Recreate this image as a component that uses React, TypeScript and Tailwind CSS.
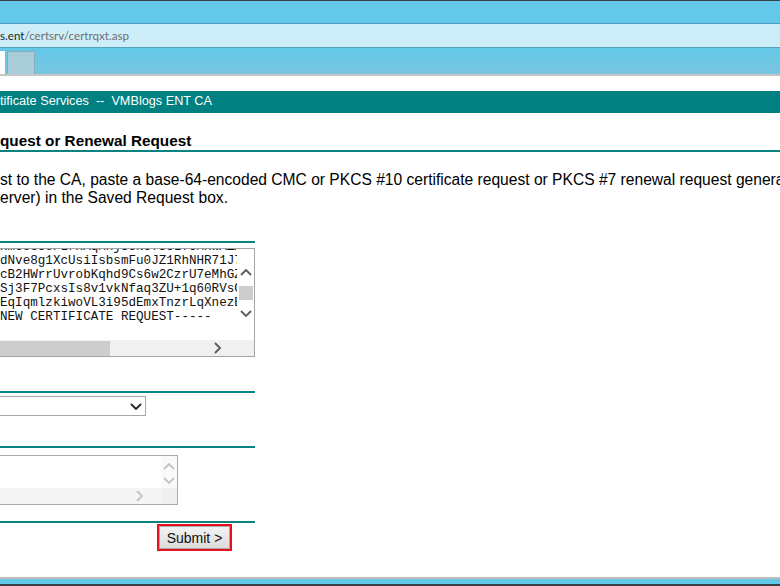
const lines = [
  'xmc8sUe/LrxAqMxjSUNU7SUL7UMxWAZAk3dQ',
  'dNve8g1XcUsiIsbsmFu0JZ1RhNHR71J7wQkL',
  'cB2HWrrUvrobKqhd9Cs6w2CzrU7eMhGZpTn4',
  'Sj3F7PcxsIs8v1vkNfaq3ZU+1q60RVsGk2Ld',
  'EqIqmlzkiwoVL3i95dEmxTnzrLqXnezBh8Ro',
  'NEW CERTIFICATE REQUEST-----',
]

const Chevron = ({ dir, color }: { dir: 'up' | 'down' | 'right'; color: string }) => {
  const d =
    dir === 'up' ? 'M1 7 L6 2 L11 7' : dir === 'down' ? 'M1 2 L6 7 L11 2' : 'M2 1 L7 6 L2 11'
  const w = dir === 'right' ? 9 : 12
  const h = dir === 'right' ? 12 : 9
  return (
    <svg width={w} height={h} viewBox={`0 0 ${w} ${h}`} fill="none">
      <path d={d} stroke={color} strokeWidth="1.8" />
    </svg>
  )
}

const TealRule = () => <div className="w-[255px] h-[2px] bg-[#0b8383]" />

export default function App() {
  return (
    <div className="w-[780px] h-[586px] overflow-hidden bg-white flex flex-col font-['Liberation_Sans',Arial,sans-serif]">
      {/* browser chrome */}
      <div className="h-[1px] bg-[#3b4046]" />
      <div className="h-[23px] bg-[#63c8e9] border-b border-[#4e9fbd]" />
      <div className="h-[24px] bg-[#cdeef8] border-b border-[#5aa3bf] flex items-center pt-[1px] text-[11.6px] font-['Lato','Noto_Sans',sans-serif]">
        <span className="text-[#1e1e1e]">s.ent</span>
        <span className="text-[#6e6e6e]">/certsrv/certrqxt.asp</span>
      </div>
      <div className="h-[26px] bg-gradient-to-b from-[#63c8e9] to-[#79c6de] flex items-end gap-[1px]">
        <div className="w-[6px] h-[23px] bg-white border-r border-[#8fb3c0]" />
        <div className="w-[28px] h-[23px] bg-[#a8ccd8] border border-b-0 border-[#88aebb]" />
      </div>
      <div className="h-[2px] bg-[#c4c6c8]" />
      <div className="h-[15px] bg-white" />

      {/* page */}
      <div className="h-[22px] bg-[#008080] text-white text-[12.7px] flex items-center whitespace-pre">
        tificate Services  --  VMBlogs ENT CA
      </div>

      <div className="flex-1 flex flex-col">
        <div className="mt-[19px] h-[18px] leading-[18px] text-[15.3px] font-bold text-black border-b-2 border-[#0b8383] box-content">
          quest or Renewal Request
        </div>

        <div className="mt-[19px] text-[15.6px] leading-[18px] text-black whitespace-nowrap">
          <div>st to the CA, paste a base-64-encoded CMC or PKCS #10 certificate request or PKCS #7 renewal request generated</div>
          <div>erver) in the Saved Request box.</div>
        </div>

        <div className="mt-[34px]">
          <TealRule />
        </div>

        {/* saved request textarea */}
        <div className="mt-[5px] w-[255px] h-[109px] border border-l-0 border-[#a3a3a3] flex flex-col">
          <div className="flex-1 flex">
            <div className="flex-1 overflow-hidden">
              <div className="-mt-[9px] font-['Liberation_Mono','Courier_New',monospace] text-[12.6px] leading-[14px] text-[#111] whitespace-pre">
                {lines.map((l) => (
                  <div key={l}>{l}</div>
                ))}
              </div>
            </div>
            <div className="w-[17px] flex flex-col items-center bg-white">
              <div className="mt-[19px]">
                <Chevron dir="up" color="#5a5a5a" />
              </div>
              <div className="mt-[9px] w-[14px] h-[14px] bg-[#cdcdcd]" />
              <div className="mt-[9px]">
                <Chevron dir="down" color="#5a5a5a" />
              </div>
            </div>
          </div>
          <div className="h-[16px] flex">
            <div className="flex-1 bg-[#f0f0f0] flex items-center">
              <div className="w-[110px] h-[15px] bg-[#cdcdcd]" />
              <div className="ml-auto mr-[15px]">
                <Chevron dir="right" color="#5a5a5a" />
              </div>
            </div>
            <div className="w-[17px] bg-[#f0f0f0]" />
          </div>
        </div>

        <div className="mt-[34px]">
          <TealRule />
        </div>

        {/* select */}
        <div className="mt-[3px] w-[146px] h-[20px] border border-l-0 border-[#a8a8a8] bg-white flex items-center justify-end pr-[3px]">
          <Chevron dir="down" color="#222" />
        </div>

        <div className="mt-[30px]">
          <TealRule />
        </div>

        {/* attributes textarea */}
        <div className="mt-[7px] w-[178px] h-[50px] border border-l-0 border-[#ababab] flex flex-col">
          <div className="flex-1 flex">
            <div className="flex-1 bg-white" />
            <div className="w-[16px] flex flex-col items-center bg-[#fafafa] pt-[6px] gap-[5px]">
              <Chevron dir="up" color="#c4c4c4" />
              <Chevron dir="down" color="#c4c4c4" />
            </div>
          </div>
          <div className="h-[16px] flex">
            <div className="flex-1 bg-[#f5f5f5] flex items-center justify-end pr-[17px]">
              <Chevron dir="right" color="#c4c4c4" />
            </div>
            <div className="w-[16px] bg-[#efefef]" />
          </div>
        </div>

        <div className="mt-[16px]">
          <TealRule />
        </div>

        <div className="mt-[1px] ml-[157px] w-[75px] h-[27px] border-2 border-[#e5121e] flex">
          <button className="flex-1 border border-[#a9a9a9] bg-gradient-to-b from-[#f3f3f3] to-[#dcdcdc] text-[14px] text-[#111] leading-none">
            Submit &gt;
          </button>
        </div>
      </div>

      <div className="h-[2px] bg-[#bdbdbd]" />
      <div className="h-[5px] bg-[#62c8e8]" />
      <div className="h-[2px] bg-[#3b4046]" />
    </div>
  )
}
